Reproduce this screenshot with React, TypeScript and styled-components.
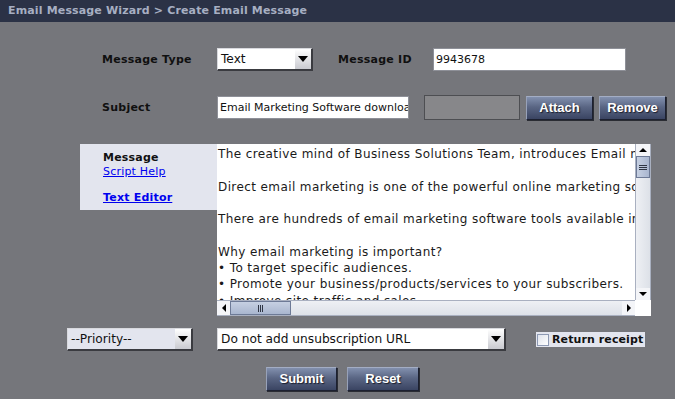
import React from 'react'
import styled, { createGlobalStyle } from 'styled-components'

const GlobalStyle = createGlobalStyle`
  html, body {
    margin: 0;
    padding: 0;
    background: #75767b;
  }
  body {
    font-family: "DejaVu Sans", Verdana, sans-serif;
  }
`

const Page = styled.div`
  width: 675px;
  height: 399px;
  background: #75767b;
  overflow: hidden;
  display: flex;
  flex-direction: column;
`

const Header = styled.div`
  height: 22px;
  line-height: 22px;
  padding-left: 8px;
  background: #2b3246;
  color: #a7afc2;
  font-weight: bold;
  font-size: 11px;
  letter-spacing: 0.15px;
  white-space: nowrap;
`

const Row = styled.div<{ $top: number; $left: number }>`
  display: flex;
  align-items: center;
  margin-top: ${(p) => p.$top}px;
  padding-left: ${(p) => p.$left}px;
  height: 25px;
`

const Label = styled.span<{ $width: number; $ml?: number }>`
  width: ${(p) => p.$width}px;
  margin-left: ${(p) => p.$ml || 0}px;
  flex: none;
  font-size: 11px;
  letter-spacing: 0.25px;
  font-weight: bold;
  color: #101010;
`

const Select = styled.div<{ $width: number; $ml?: number; $light?: boolean }>`
  position: relative;
  width: ${(p) => p.$width}px;
  margin-left: ${(p) => p.$ml || 0}px;
  height: 23px;
  box-sizing: border-box;
  flex: none;
  display: flex;
  align-items: center;
  padding-left: 3px;
  background: ${(p) => (p.$light ? '#e3e5ee' : '#ffffff')};
  border-top: 1px solid #d8d9de;
  border-left: 1px solid #d8d9de;
  border-right: 2px solid #3a3b40;
  border-bottom: 2px solid #3a3b40;
  font-size: 12.2px;
  color: #111;
  white-space: nowrap;
  overflow: hidden;
`

const SelectArrow = styled.span`
  position: absolute;
  right: 0;
  top: 0;
  bottom: 0;
  width: 16px;
  background: linear-gradient(#ffffff, #c9cad0);
  display: flex;
  align-items: center;
  justify-content: center;
  &::after {
    content: '';
    border-left: 5px solid transparent;
    border-right: 5px solid transparent;
    border-top: 6px solid #000;
  }
`

const TextInput = styled.div<{ $width: number }>`
  width: ${(p) => p.$width}px;
  height: 23px;
  box-sizing: border-box;
  flex: none;
  display: flex;
  align-items: center;
  padding-left: 2px;
  background: #fff;
  border: 1px solid #8e9098;
  font-size: 11px;
  color: #111;
  white-space: nowrap;
  overflow: hidden;
`

const FileBox = styled.div`
  width: 96px;
  height: 25px;
  box-sizing: border-box;
  margin-left: 15px;
  flex: none;
  background: #87878a;
  border: 1px solid #4d4e52;
`

const Button = styled.button<{ $width: number; $ml?: number }>`
  width: ${(p) => p.$width}px;
  height: 24px;
  margin-left: ${(p) => p.$ml || 0}px;
  flex: none;
  padding: 0;
  background: linear-gradient(#8290ae, #5a6684 45%, #3a4462);
  border: 1px solid #1c2030;
  border-top-color: #a3adc4;
  border-left-color: #97a1b9;
  color: #fff;
  font-family: "Liberation Sans", Arial, sans-serif;
  font-weight: bold;
  font-size: 13px;
  text-shadow: 1px 1px 1px #1a1e2c;
  box-shadow: 1px 1px 0 #2a2c33;
`

const MessageSection = styled.div`
  display: flex;
  margin-top: 24px;
  padding-left: 80px;
  height: 172px;
`

const SidePanel = styled.div`
  width: 137px;
  height: 66px;
  box-sizing: border-box;
  padding: 7px 0 0 23px;
  background: #e3e5ee;
  display: flex;
  flex-direction: column;
`

const SideTitle = styled.span`
  font-size: 11px;
  letter-spacing: 0.2px;
  font-weight: bold;
  color: #111;
  line-height: 14px;
`

const SideLink = styled.a<{ $bold?: boolean; $mt?: number }>`
  font-size: 11px;
  letter-spacing: 0.2px;
  font-weight: ${(p) => (p.$bold ? 'bold' : 'normal')};
  color: #0000ee;
  text-decoration: underline;
  line-height: 14px;
  margin-top: ${(p) => p.$mt || 0}px;
`

const Editor = styled.div`
  width: 434px;
  height: 172px;
  display: grid;
  grid-template-columns: 418px 16px;
  grid-template-rows: 156px 16px;
  background: #fff;
`

const EditorText = styled.div`
  overflow: hidden;
  padding: 2px 0 0 1px;
  font-size: 12px;
  letter-spacing: 0.4px;
  line-height: 16.3px;
  color: #1a1a1a;
  white-space: pre;
`

const VScroll = styled.div`
  display: flex;
  flex-direction: column;
  background: linear-gradient(90deg, #eef0f4, #dde1e8);
  border-left: 1px solid #a9b0c0;
  border-right: 1px solid #a9b0c0;
`

const HScroll = styled.div`
  display: flex;
  background: linear-gradient(#eef0f4, #dde1e8);
  border-top: 1px solid #a9b0c0;
  border-bottom: 1px solid #a9b0c0;
`

const ArrowBtn = styled.div<{ $dir: 'up' | 'down' | 'left' | 'right' }>`
  flex: none;
  width: ${(p) => (p.$dir === 'left' || p.$dir === 'right' ? '13px' : 'auto')};
  height: ${(p) => (p.$dir === 'up' || p.$dir === 'down' ? '12px' : 'auto')};
  background: #f4f5f8;
  display: flex;
  align-items: center;
  justify-content: center;
  &::after {
    content: '';
    ${(p) =>
      p.$dir === 'up'
        ? 'border-left: 4px solid transparent; border-right: 4px solid transparent; border-bottom: 4px solid #000;'
        : p.$dir === 'down'
        ? 'border-left: 4px solid transparent; border-right: 4px solid transparent; border-top: 4px solid #000;'
        : p.$dir === 'left'
        ? 'border-top: 4px solid transparent; border-bottom: 4px solid transparent; border-right: 4px solid #000;'
        : 'border-top: 4px solid transparent; border-bottom: 4px solid transparent; border-left: 4px solid #000;'}
  }
`

const Thumb = styled.div<{ $vertical?: boolean }>`
  flex: none;
  ${(p) => (p.$vertical ? 'height: 22px;' : 'width: 61px;')}
  background: ${(p) =>
    p.$vertical
      ? 'linear-gradient(90deg, #c6d0e2, #a9b6cf)'
      : 'linear-gradient(#c6d0e2, #a9b6cf)'};
  border: 1px solid #6d7a96;
  box-sizing: border-box;
  display: flex;
  align-items: center;
  justify-content: center;
  flex-direction: ${(p) => (p.$vertical ? 'column' : 'row')};
  gap: 1px;
`

const Grip = styled.span<{ $vertical?: boolean }>`
  display: block;
  background: #2f3645;
  ${(p) => (p.$vertical ? 'width: 8px; height: 1px;' : 'width: 1px; height: 7px;')}
`

const Track = styled.div`
  flex: 1;
`

const Corner = styled.div`
  background: #fff;
`

const Receipt = styled.label`
  margin-left: 30px;
  display: flex;
  align-items: center;
  gap: 3px;
  height: 15px;
  padding: 0 2px 0 1px;
  background: #e3e5ee;
  font-size: 11px;
  letter-spacing: 0.1px;
  font-weight: bold;
  color: #111;
`

const Check = styled.span`
  width: 12px;
  height: 12px;
  box-sizing: border-box;
  border: 1px solid #8d99b3;
  background: linear-gradient(135deg, #dfe3ec, #ffffff);
`

const lines = [
  'The creative mind of Business Solutions Team, introduces Email marketing software.',
  '',
  'Direct email marketing is one of the powerful online marketing solutions available.',
  '',
  'There are hundreds of email marketing software tools available in the market.',
  '',
  'Why email marketing is important?',
  '\u2022 To target specific audiences.',
  '\u2022 Promote your business/products/services to your subscribers.',
  '\u2022 Improve site traffic and sales.',
]

const App = () => {
  return (
    <Page>
      <GlobalStyle />
      <Header>Email Message Wizard &gt; Create Email Message</Header>

      <Row $top={25} $left={102}>
        <Label $width={115}>Message Type</Label>
        <Select $width={96}>
          Text
          <SelectArrow />
        </Select>
        <Label $width={95} $ml={25}>Message ID</Label>
        <TextInput $width={193}>9943678</TextInput>
      </Row>

      <Row $top={23} $left={102}>
        <Label $width={115}>Subject</Label>
        <TextInput $width={192}>Email Marketing Software download</TextInput>
        <FileBox />
        <Button $width={67} $ml={6}>Attach</Button>
        <Button $width={67} $ml={6}>Remove</Button>
      </Row>

      <MessageSection>
        <SidePanel>
          <SideTitle>Message</SideTitle>
          <SideLink href="#">Script Help</SideLink>
          <SideLink href="#" $bold $mt={12}>Text Editor</SideLink>
        </SidePanel>
        <Editor>
          <EditorText>{lines.join('\n')}</EditorText>
          <VScroll>
            <ArrowBtn $dir="up" />
            <Thumb $vertical>
              <Grip $vertical />
              <Grip $vertical />
              <Grip $vertical />
            </Thumb>
            <Track />
            <ArrowBtn $dir="down" />
          </VScroll>
          <HScroll>
            <ArrowBtn $dir="left" />
            <Thumb>
              <Grip />
              <Grip />
              <Grip />
            </Thumb>
            <Track />
            <ArrowBtn $dir="right" />
          </HScroll>
          <Corner />
        </Editor>
      </MessageSection>

      <Row $top={11} $left={67}>
        <Select $width={126} $light>
          --Priority--
          <SelectArrow />
        </Select>
        <Select $width={289} $ml={24}>
          Do not add unsubscription URL
          <SelectArrow />
        </Select>
        <Receipt>
          <Check />
          Return receipt
        </Receipt>
      </Row>

      <Row $top={14} $left={266}>
        <Button $width={71}>Submit</Button>
        <Button $width={72} $ml={10}>Reset</Button>
      </Row>
    </Page>
  )
}

export default App
